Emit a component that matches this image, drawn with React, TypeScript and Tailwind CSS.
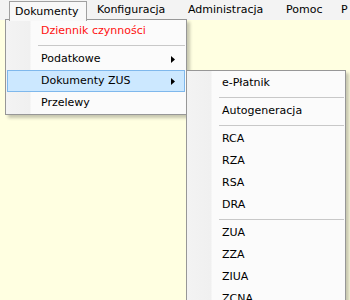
import React from 'react';

interface ItemProps {
  label: string;
  red?: boolean;
  arrow?: boolean;
  active?: boolean;
}

const MenuItem: React.FC<ItemProps> = ({ label, red, arrow, active }) => (
  <div
    className={`h-[22px] flex items-center pl-[33px] border ${
      active ? 'bg-[#cce8ff] border-[#7fb8ec]' : 'border-transparent'
    } ${red ? 'text-[#ff1010]' : 'text-black'}`}
  >
    <span className="whitespace-nowrap">{label}</span>
    {arrow && (
      <svg width="4" height="7" viewBox="0 0 4 7" className="ml-auto mr-[9px]">
        <polygon points="0,0 4,3.5 0,7" fill="#000" />
      </svg>
    )}
  </div>
);

const Separator = () => (
  <div className="h-[6px] flex items-center pl-[31px]">
    <div className="h-px w-full bg-[#c8c8c8]" />
  </div>
);

const menuBox =
  'absolute border border-[#979797] px-[1px] shadow-[3px_3px_3px_rgba(0,0,0,0.22)] bg-[linear-gradient(to_right,#f3f3f3_0,#f0f0f0_24px,#fbfbfb_25px,#fbfbfb_100%)]';

const App: React.FC = () => {
  const zus = ['RCA', 'RZA', 'RSA', 'DRA'];
  const zua = ['ZUA', 'ZZA', 'ZIUA', 'ZCNA', 'ZWUA', 'ZBA'];

  return (
    <div className="relative w-[350px] h-[300px] overflow-hidden bg-[#ffffe1] font-['DejaVu_Sans',Verdana,sans-serif] text-[11px] text-black">
      {/* menubar */}
      <div className="flex h-[20px] bg-[#f3f3f3] pl-[9px] leading-[20px] whitespace-nowrap">
        <div className="relative z-20 w-[78px] h-[20px] mt-px pl-[5px] leading-[19px] bg-[#f8f8f8] border-x border-t border-[#a0a0a0]">
          Dokumenty
        </div>
        <div className="w-[94px] pl-[10px]">Konfiguracja</div>
        <div className="w-[98px] pl-[7px]">Administracja</div>
        <div className="w-[62px] pl-[7px]">Pomoc</div>
        <div>P</div>
      </div>

      {/* Dokumenty menu */}
      <div className={`${menuBox} left-[5px] top-[19px] w-[182px] z-10`}>
        <MenuItem label="Dziennik czynności" red />
        <Separator />
        <MenuItem label="Podatkowe" arrow />
        <MenuItem label="Dokumenty ZUS" arrow active />
        <MenuItem label="Przelewy" />
      </div>

      {/* Dokumenty ZUS submenu */}
      <div className={`${menuBox} left-[186px] top-[70px] w-[160px] pt-[1px] z-30`}>
        <MenuItem label="e-Płatnik" />
        <Separator />
        <MenuItem label="Autogeneracja" />
        <Separator />
        {zus.map((z) => (
          <MenuItem key={z} label={z} />
        ))}
        <Separator />
        {zua.map((z) => (
          <MenuItem key={z} label={z} />
        ))}
      </div>
    </div>
  );
};

export default App;
